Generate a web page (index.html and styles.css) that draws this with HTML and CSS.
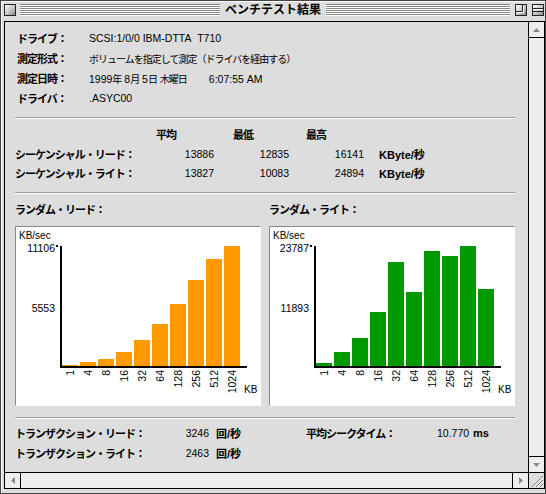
FILE: index.html
```html
<!DOCTYPE html>
<html lang="ja">
<head>
<meta charset="utf-8">
<title>ベンチテスト結果</title>
<link rel="stylesheet" href="styles.css">
</head>
<body>
<div class="window">
  <div class="titlebar">
    <span class="closebox"></span>
    <span class="stripes sl"></span>
    <span class="title">ベンチテスト結果</span>
    <span class="stripes sr"></span>
    <span class="wbox zoombox"><svg width="10" height="10" viewBox="0 0 10 10"><path d="M0 6.5H6.5V0" fill="none" stroke="#222"/><path d="M1 7.5H7.5V1" fill="none" stroke="#fff"/></svg></span>
    <span class="wbox shadebox"><svg width="10" height="10" viewBox="0 0 10 10"><path d="M0 3.5H10M0 6.5H10" fill="none" stroke="#222"/><path d="M0 4.5H10" fill="none" stroke="#fff"/></svg></span>
  </div>
  <div class="frame">
    <div class="mid">
      <div class="content">
        <div class="info">
          <div class="lbl">ドライブ：</div><div class="val">SCSI:1/0/0 IBM-DTTA&nbsp; T710</div>
          <div class="lbl">測定形式：</div><div class="val jv">ボリュームを指定して測定（ドライバを経由する）</div>
          <div class="lbl">測定日時：</div><div class="val">1999<span class="jv">年</span> 8<span class="jv">月</span> 5<span class="jv">日</span> <span class="jv">木曜日</span><span class="time">6:07:55 AM</span></div>
          <div class="lbl">ドライバ：</div><div class="val">.ASYC00</div>
        </div>
        <div class="sep s1"></div>
        <div class="seq">
          <div></div><div class="lbl h1">平均</div><div class="lbl h2">最低</div><div class="lbl h3">最高</div><div></div>
          <div class="lbl">シーケンシャル・リード：</div><div class="num">13886</div><div class="num">12835</div><div class="num">16141</div><div class="unit">KByte/秒</div>
          <div class="lbl">シーケンシャル・ライト：</div><div class="num">13827</div><div class="num">10083</div><div class="num">24894</div><div class="unit">KByte/秒</div>
        </div>
        <div class="sep s2"></div>
        <div class="charts">
          <div class="ccol">
            <div class="lbl clabel">ランダム・リード：</div>
            <div class="cbox">
              <svg class="chart" width="244" height="178" viewBox="1 1 244 178" shape-rendering="crispEdges">
                <text class="small" x="4" y="13">KB/sec</text>
                <text x="40" y="26" text-anchor="end">11106</text>
                <text x="40" y="86" text-anchor="end">5553</text>
                <rect x="41" y="19" width="2" height="2"/>
                <g class="orange">
                  <rect x="47" y="139" width="16" height="1"/>
                  <rect x="65" y="136" width="16" height="4"/>
                  <rect x="83" y="133" width="16" height="7"/>
                  <rect x="101" y="126" width="16" height="14"/>
                  <rect x="119" y="114" width="16" height="26"/>
                  <rect x="137" y="98" width="16" height="42"/>
                  <rect x="155" y="78" width="16" height="62"/>
                  <rect x="173" y="54" width="16" height="86"/>
                  <rect x="191" y="33" width="16" height="107"/>
                  <rect x="209" y="20" width="16" height="120"/>
                </g>
                <rect x="45" y="20" width="2" height="122"/>
                <rect x="45" y="140" width="187" height="2"/>
                <text transform="translate(59 144) rotate(-90)" text-anchor="end">1</text>
                <text transform="translate(77 144) rotate(-90)" text-anchor="end">4</text>
                <text transform="translate(95 144) rotate(-90)" text-anchor="end">8</text>
                <text transform="translate(113 144) rotate(-90)" text-anchor="end">16</text>
                <text transform="translate(131 144) rotate(-90)" text-anchor="end">32</text>
                <text transform="translate(149 144) rotate(-90)" text-anchor="end">64</text>
                <text transform="translate(167 144) rotate(-90)" text-anchor="end">128</text>
                <text transform="translate(185 144) rotate(-90)" text-anchor="end">256</text>
                <text transform="translate(203 144) rotate(-90)" text-anchor="end">512</text>
                <text transform="translate(221 144) rotate(-90)" text-anchor="end">1024</text>
                <text class="small" x="229" y="167">KB</text>
              </svg>
            </div>
          </div>
          <div class="ccol">
            <div class="lbl clabel">ランダム・ライト：</div>
            <div class="cbox">
              <svg class="chart" width="244" height="178" viewBox="1 1 244 178" shape-rendering="crispEdges">
                <text class="small" x="4" y="13">KB/sec</text>
                <text x="40" y="26" text-anchor="end">23787</text>
                <text x="40" y="86" text-anchor="end">11893</text>
                <rect x="41" y="19" width="2" height="2"/>
                <g class="green">
                  <rect x="47" y="137" width="16" height="3"/>
                  <rect x="65" y="126" width="16" height="14"/>
                  <rect x="83" y="112" width="16" height="28"/>
                  <rect x="101" y="86" width="16" height="54"/>
                  <rect x="119" y="36" width="16" height="104"/>
                  <rect x="137" y="66" width="16" height="74"/>
                  <rect x="155" y="25" width="16" height="115"/>
                  <rect x="173" y="30" width="16" height="110"/>
                  <rect x="191" y="20" width="16" height="120"/>
                  <rect x="209" y="63" width="16" height="77"/>
                </g>
                <rect x="45" y="20" width="2" height="122"/>
                <rect x="45" y="140" width="187" height="2"/>
                <text transform="translate(59 144) rotate(-90)" text-anchor="end">1</text>
                <text transform="translate(77 144) rotate(-90)" text-anchor="end">4</text>
                <text transform="translate(95 144) rotate(-90)" text-anchor="end">8</text>
                <text transform="translate(113 144) rotate(-90)" text-anchor="end">16</text>
                <text transform="translate(131 144) rotate(-90)" text-anchor="end">32</text>
                <text transform="translate(149 144) rotate(-90)" text-anchor="end">64</text>
                <text transform="translate(167 144) rotate(-90)" text-anchor="end">128</text>
                <text transform="translate(185 144) rotate(-90)" text-anchor="end">256</text>
                <text transform="translate(203 144) rotate(-90)" text-anchor="end">512</text>
                <text transform="translate(221 144) rotate(-90)" text-anchor="end">1024</text>
                <text class="small" x="229" y="167">KB</text>
              </svg>
            </div>
          </div>
        </div>
        <div class="sep s3"></div>
        <div class="trans">
          <div class="lbl">トランザクション・リード：</div><div class="num">3246</div><div class="unit u2">回/秒</div><div class="lbl">平均シークタイム：</div><div class="val">10.770 <b class="ms">ms</b></div>
          <div class="lbl">トランザクション・ライト：</div><div class="num">2463</div><div class="unit u2">回/秒</div><div></div><div></div>
        </div>
      </div>
      <div class="vscroll">
        <div class="arrow up"><svg width="7" height="4" viewBox="0 0 7 4"><polygon points="0,4 7,4 3.5,0" fill="#888"/></svg></div>
        <div class="track"></div>
        <div class="arrow down"><svg width="7" height="4" viewBox="0 0 7 4"><polygon points="0,0 7,0 3.5,4" fill="#888"/></svg></div>
      </div>
    </div>
    <div class="hscroll">
      <div class="arrow left"><svg width="4" height="7" viewBox="0 0 4 7"><polygon points="4,0 4,7 0,3.5" fill="#888"/></svg></div>
      <div class="track"></div>
      <div class="arrow right"><svg width="4" height="7" viewBox="0 0 4 7"><polygon points="0,0 0,7 4,3.5" fill="#888"/></svg></div>
      <div class="grow"><svg width="15" height="15" viewBox="0 0 15 15"><path d="M3 14L14 3M7 14L14 7M11 14L14 11" stroke="#777" fill="none"/><path d="M4 14L14 4M8 14L14 8M12 14L14 12" stroke="#fff" fill="none"/></svg></div>
    </div>
  </div>
</div>
</body>
</html>
```
FILE: styles.css
```css
html, body {
  margin: 0;
  padding: 0;
  background: #dddddd;
}
body {
  font-family: "Liberation Sans", "Noto Sans CJK JP", sans-serif;
  font-size: 10.5px;
  color: #000;
}
.window {
  width: 546px;
  height: 494px;
  box-sizing: border-box;
  border: 1px solid #444;
  background: #dddddd;
  padding: 0 0 4px 3px;
  display: flex;
  flex-direction: column;
  box-shadow: inset 1px 1px 0 #fff;
}
.titlebar {
  height: 20px;
  flex: none;
  box-sizing: border-box;
  padding: 3px 1px 0 0;
  display: flex;
  align-items: flex-start;
}
.closebox {
  flex: none;
  width: 12px;
  height: 12px;
  box-sizing: border-box;
  border: 1px solid #222;
  background: linear-gradient(135deg, #ffffff 0%, #cccccc 50%, #888888 100%);
  margin-right: 4px;
}
.stripes {
  height: 12px;
  background: repeating-linear-gradient(to bottom, #888 0 1px, #fff 1px 2px);
}
.stripes.sl { flex: 201 1 0; }
.stripes.sr { flex: 185 1 0; }
.title {
  flex: none;
  font-family: "Noto Sans CJK JP", sans-serif;
  font-weight: bold;
  font-size: 12px;
  line-height: 12px;
  padding: 0 5px;
  margin-top: -1px;
}
.wbox {
  flex: none;
  width: 12px;
  height: 12px;
  box-sizing: border-box;
  border: 1px solid #222;
  background: linear-gradient(135deg, #ffffff 0%, #cccccc 50%, #888888 100%);
  margin-left: 5px;
  display: flex;
}
.wbox svg { display: block; }
.frame {
  flex: 1;
  min-height: 0;
  border: 1px solid #000;
  display: flex;
  flex-direction: column;
}
.mid {
  flex: 1;
  min-height: 0;
  display: flex;
}
.content {
  flex: 1;
  background: #dddddd;
  padding: 6px 13px 0 10px;
  overflow: hidden;
}
.vscroll {
  flex: none;
  width: 16px;
  box-sizing: border-box;
  border-left: 1px solid #000;
  background: #eeeeee;
  display: flex;
  flex-direction: column;
}
.track { flex: 1; }
.arrow {
  flex: none;
  box-sizing: border-box;
  display: flex;
  align-items: center;
  justify-content: center;
}
.arrow svg { display: block; }
.arrow.up { height: 16px; border-bottom: 1px solid #000; }
.arrow.down { height: 16px; border-top: 1px solid #000; }
.hscroll {
  flex: none;
  height: 16px;
  box-sizing: border-box;
  border-top: 1px solid #000;
  background: #eeeeee;
  display: flex;
}
.arrow.left { width: 16px; border-right: 1px solid #000; }
.arrow.right { width: 16px; border-left: 1px solid #000; }
.grow {
  flex: none;
  width: 16px;
  box-sizing: border-box;
  border-left: 1px solid #000;
  background: #dddddd;
}
.grow svg { display: block; }

.lbl {
  font-family: "Noto Sans CJK JP", sans-serif;
  font-weight: bold;
  font-size: 11px;
  letter-spacing: -1px;
  white-space: nowrap;
}
.jv {
  font-family: "Noto Sans CJK JP", sans-serif;
  font-size: 10px;
  letter-spacing: -1px;
}
.val { white-space: nowrap; }
.time { margin-left: 22px; }

.info {
  display: grid;
  grid-template-columns: 72px 1fr;
  grid-auto-rows: 20px;
  align-items: center;
  padding-left: 2px;
}
.sep {
  border-top: 1px solid #999;
  border-bottom: 1px solid #fff;
}
.s1 { margin: 9px 0 5px; }
.s2 { margin: 9px 0 5px; }
.s3 { margin: 11px 0 4px; }

.seq {
  display: grid;
  grid-template-columns: 140px 59px 75px 75px 1fr;
  grid-template-rows: 20px 19.5px 19.5px;
  align-items: center;
}
.h1 { padding-left: 1px; }
.h2 { padding-left: 19px; }
.h3 { padding-left: 17px; }
.num { text-align: right; }
.unit {
  padding-left: 15px;
  font-weight: bold;
  font-size: 11px;
  white-space: nowrap;
}
.u2 { padding-left: 7px; }
.ms { font-size: 11px; margin-left: 1px; }

.charts {
  display: grid;
  grid-template-columns: 246px 246px;
  column-gap: 8px;
}
.ccol {
  display: flex;
  flex-direction: column;
  gap: 7px;
}
.clabel {
  height: 20px;
  line-height: 20px;
}
.cbox {
  height: 180px;
  box-sizing: border-box;
  border: 1px solid;
  border-color: #888 #fff #fff #888;
  background: #fff;
}
.chart {
  display: block;
  font-family: "Liberation Sans", sans-serif;
  font-size: 10.5px;
  fill: #000;
}
.chart .small { font-size: 10px; }
.orange rect { fill: #ff9900; }
.green rect { fill: #009900; }

.trans {
  display: grid;
  grid-template-columns: 170px 24px 97px 131px 1fr;
  grid-auto-rows: 20px;
  align-items: center;
}
```
